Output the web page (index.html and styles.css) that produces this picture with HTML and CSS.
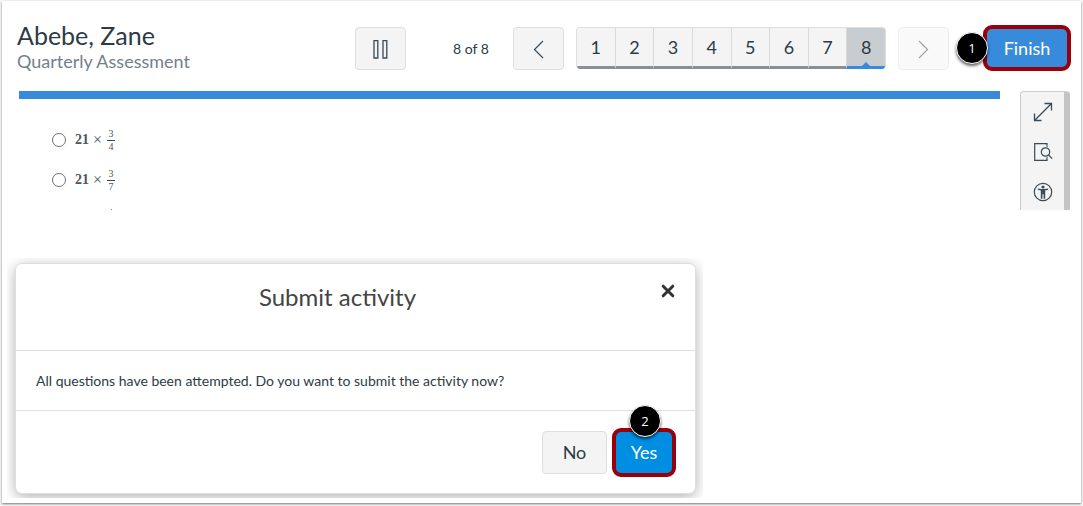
FILE: index.html
```html
<!DOCTYPE html>
<html lang="en">
<head>
<meta charset="utf-8">
<title>Quarterly Assessment</title>
<link rel="stylesheet" href="styles.css">
</head>
<body>
<main class="frame">
  <header class="topbar">
    <div class="student">
      <h1 class="student-name">Abebe, Zane</h1>
      <p class="assessment">Quarterly Assessment</p>
    </div>
    <button class="btn icon-btn" type="button" aria-label="Pause">
      <svg width="16" height="20" viewBox="0 0 16 20" fill="none" stroke="#394b58" stroke-width="1.3"><path d="M1 1.600h3.800v17.400H1zM10 1.600h3.800v17.400H10z"/></svg>
    </button>
    <span class="count">8 of 8</span>
    <button class="btn icon-btn" type="button" aria-label="Previous">
      <svg width="12" height="20" viewBox="0 0 12 20" fill="none" stroke="#394b58" stroke-width="1.2"><path d="M10 2 1.500 10.500l8.500 8.500"/></svg>
    </button>
    <nav class="pager" aria-label="Questions">
      <button class="page" type="button">1</button>
      <button class="page" type="button">2</button>
      <button class="page" type="button">3</button>
      <button class="page" type="button">4</button>
      <button class="page" type="button">5</button>
      <button class="page" type="button">6</button>
      <button class="page" type="button">7</button>
      <button class="page current" type="button" aria-current="page">8</button>
    </nav>
    <button class="btn icon-btn faded" type="button" aria-label="Next">
      <svg width="12" height="20" viewBox="0 0 12 20" fill="none" stroke="#394b58" stroke-width="1.2"><path d="M1 2 9.500 10.500 1 19"/></svg>
    </button>
    <div class="marked finish-wrap">
      <button class="btn primary finish" type="button">Finish</button>
      <span class="badge badge-left">1</span>
    </div>
  </header>

  <section class="question">
    <div class="content">
      <div class="progress"></div>
      <div class="options">
        <label class="option"><input class="radio" type="radio" name="answer"><span class="math">21 <span class="times">×</span> <span class="frac"><span class="num">3</span><span class="den">4</span></span></span></label>
        <label class="option"><input class="radio" type="radio" name="answer"><span class="math">21 <span class="times">×</span> <span class="frac"><span class="num">3</span><span class="den">7</span></span></span></label>
        <div class="speck"></div>
      </div>
    </div>
    <aside class="tools">
      <button class="tool" type="button" aria-label="Full screen">
        <svg width="20" height="20" viewBox="0 0 20 20" fill="none" stroke="#394b58" stroke-width="1.3"><path d="M1.500 18.500l17-17M11.500 1.500h7v7M1.500 11.500v7h7"/></svg>
      </button>
      <button class="tool" type="button" aria-label="Review">
        <svg width="20" height="20" viewBox="0 0 20 20" fill="none" stroke="#394b58" stroke-width="1.2"><path d="M14 4.800V1.700H1.700v16.600H14v-3.100"/><circle cx="12.500" cy="10" r="4.200"/><path d="M15.600 13l3.600 3.600"/></svg>
      </button>
      <button class="tool" type="button" aria-label="Accessibility">
        <svg width="20" height="20" viewBox="0 0 20 20"><circle cx="10" cy="10" r="8.700" fill="none" stroke="#394b58" stroke-width="1.200"/><circle cx="10" cy="5" r="1.600" fill="#394b58"/><path d="M4.800 6.400 8.500 7h3l3.700-.6v1.300L12.200 8.600v8.200h-1.600v-4.600H9.400v4.600H7.800V8.600l-3-.9z" fill="#394b58"/></svg>
      </button>
    </aside>
  </section>

  <div class="dialog-area">
    <section class="dialog" role="dialog" aria-labelledby="dialog-title">
      <header class="dialog-head">
        <h2 class="dialog-title" id="dialog-title">Submit activity</h2>
        <button class="close" type="button" aria-label="Close">
          <svg width="14" height="14" viewBox="0 0 14 14" fill="none" stroke="#333" stroke-width="3" stroke-linecap="round"><path d="M2.200 2.200l9.600 9.600M11.800 2.200l-9.600 9.600"/></svg>
        </button>
      </header>
      <p class="dialog-text">All questions have been attempted. Do you want to submit the activity now?</p>
      <footer class="dialog-foot">
        <button class="btn no" type="button">No</button>
        <div class="marked">
          <button class="btn primary yes" type="button">Yes</button>
          <span class="badge badge-top">2</span>
        </div>
      </footer>
    </section>
  </div>
</main>
</body>
</html>
```
FILE: styles.css
```css
* {
  box-sizing: border-box;
}

body {
  margin: 0;
  min-height: 100vh;
  padding: 1px 2px 3px;
  display: flex;
  background: #f6f6f6;
  color: #2d3b45;
  font-family: Lato, "Open Sans", sans-serif;
}

h1, h2, p {
  margin: 0;
  font-weight: 400;
}

button {
  font: inherit;
  color: inherit;
  padding: 0;
}

svg {
  display: block;
}

.frame {
  flex: 1;
  min-width: 0;
  background: #fff;
  box-shadow: 0 1px 2px 0 #777;
}

.topbar {
  display: flex;
  align-items: flex-start;
  height: 90px;
  padding: 20px 10px 0 15px;
}

.student {
  flex: 1;
}

.student-name {
  font-size: 25px;
  line-height: 29px;
}

.assessment {
  font-size: 18px;
  line-height: 22px;
  color: #73818c;
}

.btn {
  display: flex;
  align-items: center;
  justify-content: center;
  height: 43px;
  background: #f4f4f4;
  border: 1px solid #dcdfe0;
  border-radius: 4px;
  font-size: 18px;
}

.icon-btn {
  width: 51px;
  margin-top: 6px;
}

.count {
  width: 107px;
  margin-top: 6px;
  padding-left: 23px;
  line-height: 43px;
  font-size: 14px;
  text-align: center;
}

.faded {
  opacity: 0.5;
}

.pager {
  display: flex;
  width: 310px;
  height: 42px;
  margin: 6px 12px 0;
  border: 1px solid #dcdfe0;
  border-bottom: 0;
  border-radius: 4px;
  overflow: hidden;
}

.page {
  position: relative;
  flex: 1;
  border: 0;
  border-right: 1px solid #d8dadb;
  border-bottom: 3px solid #869099;
  background: #f4f4f4;
  font-size: 18px;
}

.current {
  background: #c7cdd1;
  border-right: 0;
  border-bottom-color: #388bdb;
}

.current::after {
  content: "";
  position: absolute;
  bottom: 0;
  left: 50%;
  margin-left: -4px;
  border: 4px solid transparent;
  border-top: 0;
  border-bottom-color: #388bdb;
}

.marked {
  position: relative;
  border: 4px solid #990009;
  border-radius: 9px;
  background: #990009;
}

.primary {
  border: 0;
  border-radius: 5px;
  color: #fff;
}

.finish-wrap {
  margin: 4px 0 0 34px;
}

.finish {
  width: 80px;
  height: 38px;
  background: #388bdb;
}

.badge {
  position: absolute;
  width: 32px;
  height: 32px;
  border-radius: 50%;
  background: #000;
  border: 1px solid #fff;
  box-shadow: 0 2px 3px rgba(0, 0, 0, 0.6);
  color: #fff;
  font-family: "Open Sans", sans-serif;
  font-size: 13px;
  line-height: 30px;
  text-align: center;
}

.badge-left {
  left: -31px;
  top: 3px;
}

.badge-top {
  left: 13px;
  top: -27px;
}

.question {
  display: flex;
  gap: 20px;
  height: 119px;
  padding: 0 11px 0 17px;
}

.content {
  flex: 1;
}

.progress {
  height: 8px;
  background: #388bdb;
}

.options {
  padding: 21px 0 0 33px;
}

.option {
  display: flex;
  align-items: center;
  gap: 9px;
  height: 40px;
  width: max-content;
}

.radio {
  appearance: none;
  width: 14px;
  height: 14px;
  margin: 0;
  border: 1px solid #707070;
  border-radius: 50%;
  background: #fff;
}

.math {
  display: flex;
  align-items: center;
  gap: 4px;
  color: #4b5761;
  font-family: "Liberation Serif", serif;
  font-size: 14px;
  font-weight: 700;
}

.times {
  font-size: 16px;
  font-weight: 400;
}

.frac {
  display: flex;
  flex-direction: column;
  width: 8px;
  margin-left: 1px;
  font-size: 10px;
  font-weight: 400;
  line-height: 12px;
  text-align: center;
}

.num {
  border-bottom: 1px solid #394b58;
}

.speck {
  width: 1px;
  height: 1px;
  margin: 9px 0 0 59px;
  background: #7d868d;
}

.tools {
  width: 50px;
  border: 1px solid #c7cdd1;
  border-right: 6px solid #c4c4c4;
  border-bottom: 0;
  border-radius: 4px 4px 0 0;
  background: #f4f4f4;
}

.tool {
  display: flex;
  align-items: center;
  justify-content: center;
  width: 100%;
  height: 40px;
  border: 0;
  background: none;
}

.dialog-area {
  width: 696px;
  max-width: 100%;
  margin: 48px 0 0 5px;
  padding: 5px 7px 4px 8px;
  overflow: hidden;
}

.dialog {
  border: 1px solid #dedede;
  border-radius: 7px;
  background: #fff;
  box-shadow: 0 3px 14px rgba(0, 0, 0, 0.3);
}

.dialog-head {
  position: relative;
  height: 87px;
  padding: 18px 36px 0 0;
  border-bottom: 1px solid #dedede;
}

.dialog-title {
  font-size: 24px;
  line-height: 30px;
  text-align: center;
  color: #444;
}

.close {
  position: absolute;
  top: 20px;
  right: 20px;
  border: 0;
  background: none;
}

.dialog-text {
  padding: 0 20px;
  border-bottom: 1px solid #dedede;
  font-size: 14px;
  line-height: 59px;
}

.dialog-foot {
  display: flex;
  justify-content: flex-end;
  align-items: center;
  gap: 5px;
  height: 82px;
  padding-right: 19px;
}

.no {
  width: 65px;
}

.yes {
  width: 56px;
  height: 41px;
  background: #008ee2;
}
```
